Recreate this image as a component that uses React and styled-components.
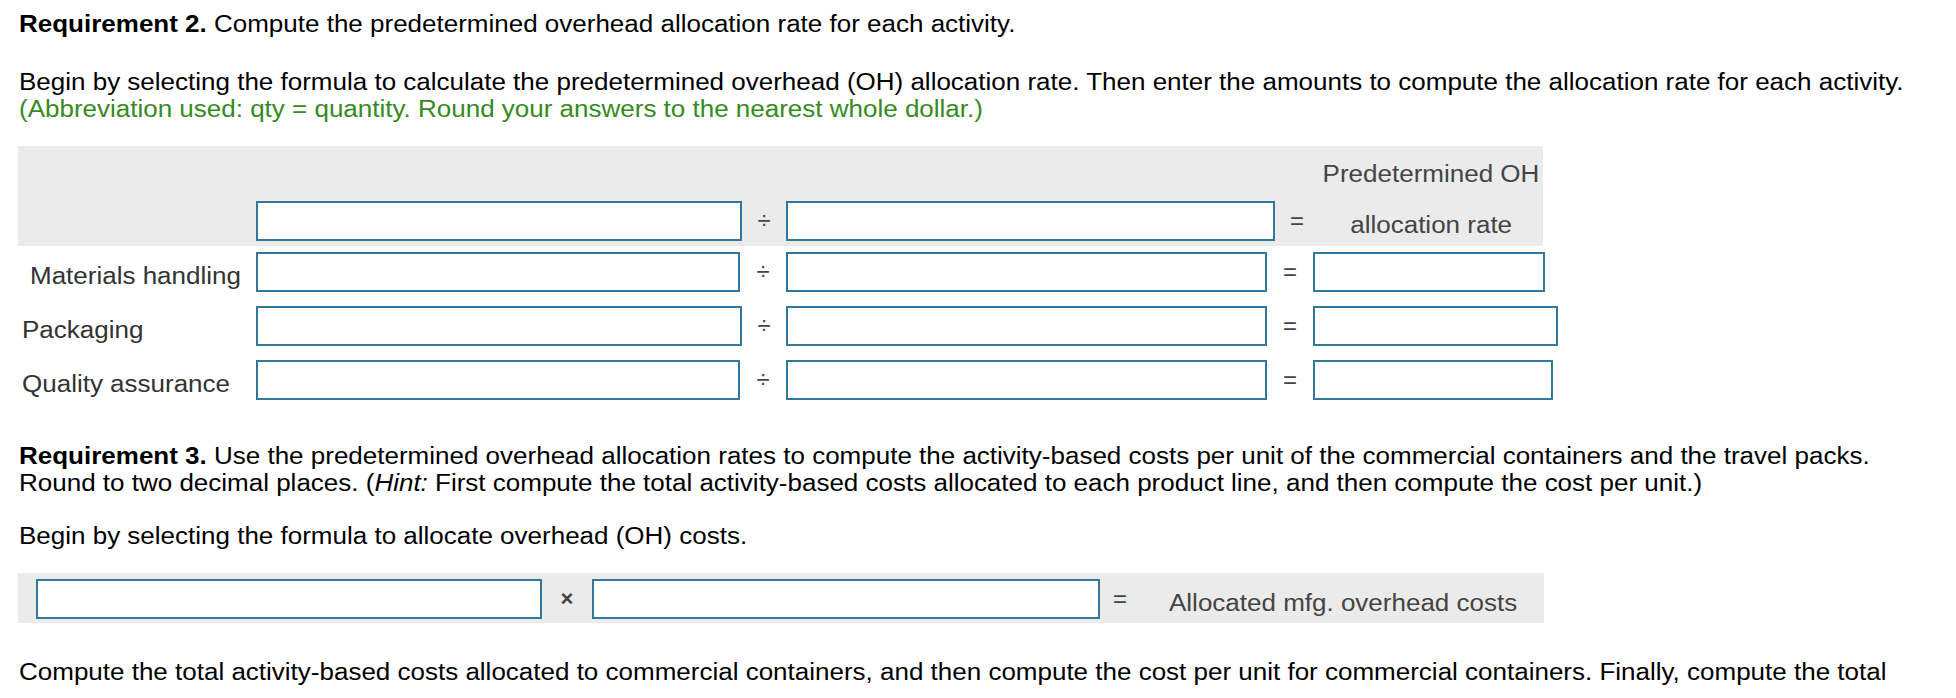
import React from 'react'
import styled, { createGlobalStyle, css } from 'styled-components'

const GlobalStyle = createGlobalStyle`
    body {
        margin: 0;
        background: #ffffff;
        font-family: "Liberation Sans", Arial, Helvetica, sans-serif;
        font-size: 23.5px;
        line-height: 27px;
        color: #000000;
        overflow: hidden;
    }
`

// the source text is slightly wide for its height
const wide = css`
    transform: scaleX(1.106);
    transform-origin: ${props => (props.$center ? 'center' : 'left')} center;
`

const rows = [
    { label: 'Materials handling', indent: 12, w1: 484, op1: 46, w2: 481, op2: 46, w3: 232 },
    { label: 'Packaging', indent: 4, w1: 486, op1: 44, w2: 481, op2: 46, w3: 245 },
    { label: 'Quality assurance', indent: 4, w1: 484, op1: 46, w2: 481, op2: 46, w3: 240 },
]

function App() {
    return (
        <Page>
            <GlobalStyle />
            <Para>
                <b>Requirement 2.</b> Compute the predetermined overhead allocation rate for each activity.
            </Para>
            <Para $top={31}>
                Begin by selecting the formula to calculate the predetermined overhead (OH) allocation rate. Then enter the amounts to compute the allocation rate for each activity.
                <br />
                <Note>(Abbreviation used: qty = quantity. Round your answers to the nearest whole dollar.)</Note>
            </Para>

            <HeaderBlock>
                <CaptionRow>
                    <HeadText>
                        <Stretch $center>Predetermined OH</Stretch>
                    </HeadText>
                </CaptionRow>
                <Row>
                    <Label $indent={4} />
                    <InputBox $w={486} />
                    <Op $w={44}>÷</Op>
                    <InputBox $w={489} />
                    <Op $w={44}>=</Op>
                    <HeadText $drop={8}>
                        <Stretch $center>allocation rate</Stretch>
                    </HeadText>
                </Row>
            </HeaderBlock>

            {rows.map(item => (
                <DataRow key={item.label}>
                    <Label $indent={item.indent}>
                        <Stretch>{item.label}</Stretch>
                    </Label>
                    <InputBox $w={item.w1} />
                    <Op $w={item.op1}>÷</Op>
                    <InputBox $w={item.w2} />
                    <Op $w={item.op2}>=</Op>
                    <InputBox $w={item.w3} />
                </DataRow>
            ))}

            <Para $top={35}>
                <b>Requirement 3.</b> Use the predetermined overhead allocation rates to compute the activity-based costs per unit of the commercial containers and the travel packs.
                <br />
                Round to two decimal places. (<i>Hint:</i> First compute the total activity-based costs allocated to each product line, and then compute the cost per unit.)
            </Para>
            <Para $top={26}>
                Begin by selecting the formula to allocate overhead (OH) costs.
            </Para>

            <FormulaBar>
                <InputBox $w={506} />
                <Op $w={50} $small>×</Op>
                <InputBox $w={508} />
                <Op $w={40}>=</Op>
                <BarText>
                    <Stretch>Allocated mfg. overhead costs</Stretch>
                </BarText>
            </FormulaBar>

            <Para $top={36}>
                Compute the total activity-based costs allocated to commercial containers, and then compute the cost per unit for commercial containers. Finally, compute the total
            </Para>
        </Page>
    )
}

export default App

const Page = styled.div`
    padding: 11px 0 0 18px;
`

const Para = styled.p`
    width: max-content;
    margin: ${props => props.$top || 0}px 0 0 1px;
    white-space: nowrap;
    ${wide}
    b {
        font-weight: bold;
    }
`

const Stretch = styled.span`
    display: inline-block;
    white-space: nowrap;
    ${wide}
`

const Note = styled.span`
    color: #368a22;
`

const HeaderBlock = styled.div`
    margin-top: 23px;
    width: 1525px;
    height: 100px;
    box-sizing: border-box;
    padding: 12px 0 5px;
    background: #ebebeb;
    display: flex;
    flex-direction: column;
    line-height: 30px;
`

const CaptionRow = styled.div`
    height: 31px;
    margin-bottom: 12px;
    display: flex;
    justify-content: flex-end;
    align-items: center;
`

const Row = styled.div`
    display: flex;
    align-items: center;
    height: 40px;
`

const DataRow = styled.div`
    display: flex;
    align-items: center;
    height: 40px;
    padding: 6px 0 8px;
    line-height: 30px;
`

const Label = styled.div`
    width: 238px;
    flex-shrink: 0;
    box-sizing: border-box;
    padding: 7px 0 0 ${props => props.$indent}px;
    color: #333333;
`

const InputBox = styled.div`
    width: ${props => props.$w}px;
    height: 40px;
    box-sizing: border-box;
    border: 2px solid #33789a;
    background: #ffffff;
    flex-shrink: 0;
`

const Op = styled.div`
    width: ${props => props.$w}px;
    flex-shrink: 0;
    text-align: center;
    color: #444444;
    font-size: ${props => (props.$small ? 22 : 24)}px;
    ${props => props.$small && 'font-weight: bold;'}
`

const HeadText = styled.div`
    width: 224px;
    padding-top: ${props => props.$drop || 1}px;
    text-align: center;
    color: #444444;
`

const FormulaBar = styled.div`
    margin-top: 23px;
    width: 1526px;
    height: 50px;
    box-sizing: border-box;
    padding: 6px 0 4px 18px;
    background: #ebebeb;
    display: flex;
    align-items: center;
    line-height: 30px;
`

const BarText = styled.div`
    margin-left: 29px;
    padding-top: 7px;
    color: #444444;
`
